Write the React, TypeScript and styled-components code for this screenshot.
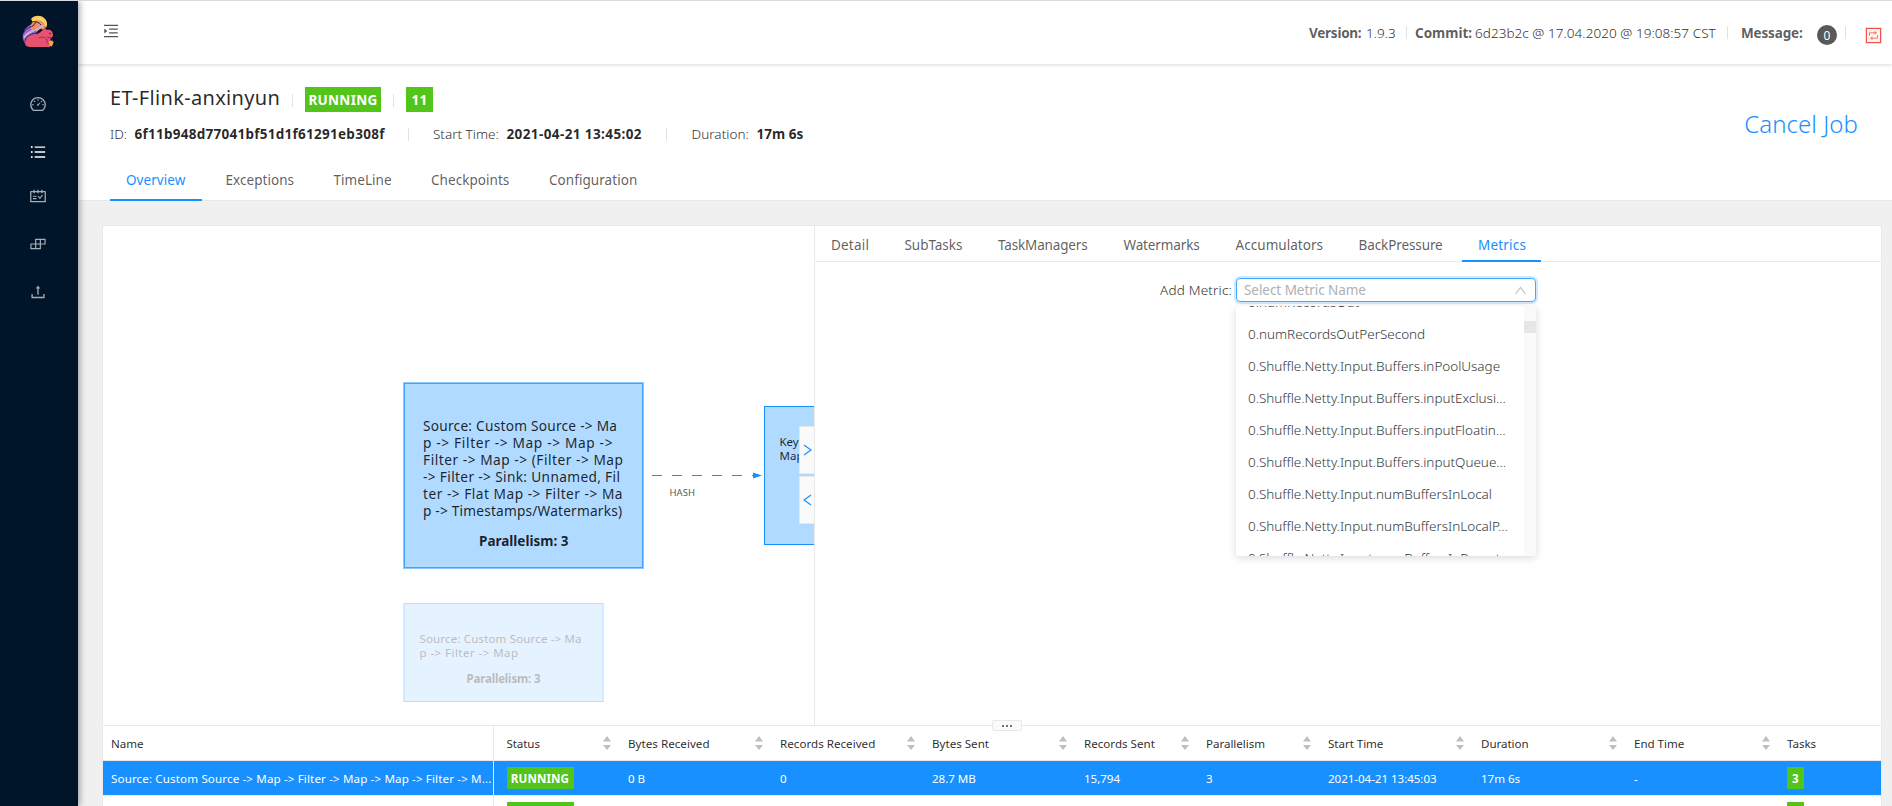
import React from 'react';
import styled, { createGlobalStyle, css } from 'styled-components';
import {
  AiOutlineBars,
  AiOutlineBuild,
  AiOutlineDashboard,
  AiOutlineMenuUnfold,
  AiOutlineSchedule,
  AiOutlineUpload,
} from 'react-icons/ai';

const blue = '#1890ff';
const green = '#52c41a';
const line = '#e8e8e8';
const font = "'Noto Sans', 'Open Sans', sans-serif";

const GlobalStyle = createGlobalStyle`
  * { box-sizing: border-box; }
  body {
    margin: 0;
    background: #f0f0f0;
    color: rgba(0, 0, 0, 0.65);
    font-family: ${font};
    font-size: 13.5px;
  }
`;

const Page = styled.div`
  display: flex;
  width: 1892px;
  height: 806px;
  overflow: hidden;
  border-top: 1px solid #d9d9de;
`;

const Sider = styled.aside`
  z-index: 2;
  flex: none;
  display: flex;
  flex-direction: column;
  align-items: center;
  width: 78px;
  padding: 12px 2px 0 0;
  background: #001529;
  box-shadow: 2px 0 6px rgba(0, 21, 41, 0.35);
`;

const Nav = styled.nav`
  display: flex;
  flex-direction: column;
  align-items: center;
  margin-top: 31px;
`;

const NavItem = styled.a<{ $active?: boolean }>`
  display: flex;
  align-items: center;
  justify-content: center;
  width: 76px;
  height: 48px;
  margin-bottom: ${(p) => (p.$active ? -4 : 0)}px;
  font-size: 18px;
  color: ${(p) => (p.$active ? '#fff' : 'rgba(255, 255, 255, 0.65)')};
`;

const Main = styled.main`
  flex: 1;
  min-width: 0;
  display: flex;
  flex-direction: column;
`;

const TopBar = styled.header`
  z-index: 1;
  flex: none;
  display: flex;
  justify-content: space-between;
  height: 63px;
  padding: 0 10px 0 24px;
  background: #fff;
  box-shadow: 0 1px 4px rgba(0, 21, 41, 0.16);
`;

const Toggle = styled.button`
  display: flex;
  align-items: flex-start;
  padding: 21px 0 0;
  border: 0;
  background: none;
  color: #555;
  font-size: 18px;
`;

const Info = styled.div`
  display: flex;
  align-items: center;
  height: 63px;
`;

const Text = styled.span<{ $w?: number; $ls?: number; $bold?: boolean; $light?: boolean }>`
  flex: none;
  white-space: nowrap;
  ${(p) => p.$w && css`width: ${p.$w}px;`}
  ${(p) => p.$light && css`color: #333;`}
  letter-spacing: ${(p) => p.$ls ?? 0}px;
  font-weight: ${(p) => (p.$bold ? 700 : p.$light ? 300 : 400)};
`;

const Strong = styled(Text)`
  color: rgba(0, 0, 0, 0.85);
`;

const Placeholder = styled(Text)`
  color: #b0b0b0;
`;

const Divider = styled.i<{ $gap?: string }>`
  flex: none;
  width: 1px;
  height: 13px;
  margin: ${(p) => p.$gap ?? '0 8px'};
  background: #e2e2e2;
`;

const Badge = styled.span`
  display: flex;
  align-items: center;
  justify-content: center;
  width: 20px;
  height: 20px;
  margin-top: 5px;
  border-radius: 50%;
  background: #595959;
  color: #fff;
  font-size: 12px;
`;

const JobHeader = styled.section`
  flex: none;
  display: flex;
  justify-content: space-between;
  height: 137px;
  padding: 0 34px 0 32px;
  background: #fff;
  border-bottom: 1px solid ${line};
`;

const JobInfo = styled.div`
  display: flex;
  flex-direction: column;
`;

const TitleRow = styled.div`
  flex: none;
  display: flex;
  align-items: center;
  height: 25px;
  margin-top: 23px;
`;

const Title = styled.h1`
  width: 182px;
  margin: -4px 0 0;
  font-size: 20px;
  font-weight: 400;
  letter-spacing: 0.32px;
  line-height: 24px;
  white-space: nowrap;
  color: rgba(0, 0, 0, 0.85);
`;

const Tag = styled.span<{ $w: number; $h: number; $size?: number; $ls?: number }>`
  flex: none;
  display: inline-flex;
  align-items: center;
  justify-content: center;
  width: ${(p) => p.$w}px;
  height: ${(p) => p.$h}px;
  background: ${green};
  color: #fff;
  font-size: ${(p) => p.$size ?? 13.5}px;
  font-weight: 700;
  letter-spacing: ${(p) => p.$ls ?? 0.3}px;
`;

const MetaRow = styled.div`
  flex: none;
  display: flex;
  align-items: center;
  height: 20px;
  margin-top: 12px;
`;

const Tabs = styled.div<{ $gap: number }>`
  flex: none;
  display: flex;
  gap: ${(p) => p.$gap}px;
`;

const Tab = styled.a<{ $w: number; $h: number; $lh: number; $ls: number; $active?: boolean }>`
  flex: none;
  width: ${(p) => p.$w}px;
  height: ${(p) => p.$h}px;
  padding-left: 16px;
  line-height: ${(p) => p.$lh}px;
  letter-spacing: ${(p) => p.$ls}px;
  white-space: nowrap;
  ${(p) =>
    p.$active &&
    css`
      color: ${blue};
      border-bottom: 2px solid ${blue};
    `}
`;

const JobTabs = styled(Tabs)`
  margin-top: 17px;
`;

const Cancel = styled.a`
  margin-top: 43px;
  font-size: 24px;
  font-weight: 300;
  letter-spacing: 0.05px;
  line-height: 34px;
  color: ${blue};
`;

const Content = styled.section`
  flex: 1;
  min-height: 0;
  display: flex;
  flex-direction: column;
  margin: 24px 10px 0 24px;
  background: #fff;
  border: 1px solid ${line};
  border-bottom: 0;
`;

const Panels = styled.div`
  flex: none;
  display: flex;
  height: 500px;
  border-bottom: 1px solid ${line};
`;

const GraphPane = styled.div`
  position: relative;
  flex: none;
  width: 712px;
  border-right: 1px solid ${line};
`;

const Graph = styled.svg`
  display: block;
  font-family: ${font};
`;

const PaneButtons = styled.div`
  position: absolute;
  top: 200px;
  right: 0;
  display: flex;
  flex-direction: column;
  gap: 2px;
`;

const PaneButton = styled.button`
  display: flex;
  align-items: center;
  justify-content: center;
  width: 15px;
  height: 48px;
  padding: 0;
  border: 1px solid ${line};
  border-right: 0;
  background: #fafafa;
`;

const DetailPane = styled.div`
  flex: 1;
  display: flex;
  flex-direction: column;
`;

const DetailTabs = styled(Tabs)`
  height: 36px;
  border-bottom: 1px solid ${line};
`;

const MetricRow = styled.div`
  display: flex;
  align-items: center;
  height: 24px;
  margin: 16px 0 0 345px;
`;

const Select = styled.div`
  position: relative;
  display: flex;
  align-items: center;
  justify-content: space-between;
  width: 300px;
  height: 24px;
  padding: 0 9px 0 7px;
  border: 1px solid #40a9ff;
  border-radius: 4px;
  box-shadow: 0 0 0 2px rgba(24, 144, 255, 0.2);
`;

const Dropdown = styled.div`
  position: absolute;
  top: 27px;
  left: -1px;
  display: flex;
  width: 300px;
  height: 250px;
  overflow: hidden;
  border-radius: 4px;
  background: #fff;
  box-shadow: 0 2px 8px rgba(0, 0, 0, 0.15);
`;

const Options = styled.ul`
  flex: 1;
  margin: -19px 0 0;
  padding: 0;
  list-style: none;
`;

const Option = styled.li`
  height: 32px;
  padding-left: 12px;
  color: #383838;
  font-weight: 300;
  line-height: 31px;
  letter-spacing: -0.02px;
  white-space: nowrap;
`;

const Track = styled.div`
  width: 12px;
  padding-top: 15px;
  background: #fafafa;
`;

const Thumb = styled.div`
  height: 12px;
  background: #e6e6e6;
`;

const Table = styled.div`
  position: relative;
  flex: 1;
  min-height: 0;
  font-size: 11.6px;
`;

const Handle = styled.div`
  position: absolute;
  top: -6px;
  left: 889px;
  display: flex;
  align-items: center;
  justify-content: center;
  gap: 2px;
  width: 30px;
  height: 11px;
  border: 1px solid ${line};
  border-radius: 2px;
  background: #fafafa;
`;

const Dot = styled.i`
  width: 2px;
  height: 2px;
  border-radius: 1px;
  background: #444;
`;

const Row = styled.div<{ $kind: 'head' | 'selected' | 'plain' }>`
  display: grid;
  grid-template-columns: 391px 121.5px 152px 152px 152px 122px 122px 153px 153px 153px 1fr;
  height: 35px;
  border-bottom: 1px solid ${line};
  ${(p) => p.$kind === 'head' && css`color: rgba(0, 0, 0, 0.85);`}
  ${(p) => p.$kind === 'selected' && css`background: ${blue}; color: #fff;`}
`;

const Cell = styled.div<{ $first?: boolean; $ls?: number }>`
  display: flex;
  align-items: center;
  justify-content: space-between;
  padding: 0 5px 0 ${(p) => (p.$first ? 8 : 12.5)}px;
  letter-spacing: ${(p) => p.$ls ?? -0.05}px;
  white-space: nowrap;
  ${(p) => p.$first && css`
    padding-right: 0;
    border-right: 1px solid ${line};
  `}
`;

const Logo = () => (
  <svg width="36" height="36" viewBox="0 0 36 36">
    <path d="M9 34C4 31 2 26 3 21c1-4 3-7 7-9l14-1c0 4-4 5-7 7l-4 15z" fill="#9b66c9" />
    <path d="M10 13c1-2 3-3 2-6 4-4 9-4 13-1 3 4 2 8-2 11l-3-2-3 4-2-4-3 3z" fill="#f0925f" />
    <path d="M11 6c3-4 10-4 13-1 3 3 4 6 2 10-1-3-2-6-5-7-3-1-6-1-8 1z" fill="#f9cf62" />
    <path d="M4 25c2-5 7-6 11-8 3-1 6-2 8-5" fill="none" stroke="#dba9dd" strokeWidth="1.800" />
    <path d="M5 29c0-5 5-8 11-9 4-1 7-1 8-4M3 21c2-5 6-7 10-8l3-4M12 9c3-1 7 0 9 3" fill="none" stroke="#2b2140" strokeWidth="1" />
    <path d="M6 33c-2-5 1-10 7-11 5-1 7-2 11-6l1-1 2 2c4-1 6 2 6 5 0 2-2 3-3 4l2 3-4 1 2 3v1H10z" fill="#e6526f" />
    <path d="M19 25c4-2 8 0 8 3 0 2 2 4 4 4M27 24l5 1" fill="none" stroke="#8e2748" strokeWidth="0.900" />
    <path d="M28.500 28.500l4-1 1 2-1.500 4-3-1z" fill="#f5a63a" />
    <circle cx="30" cy="20.500" r="0.800" fill="#3b1727" />
  </svg>
);

const Sorter = () => (
  <svg width="8" height="14" viewBox="0 0 8 14" fill="#bfbfbf">
    <path d="M4 0L8 5.500H0zM4 14L0 9h8z" />
  </svg>
);

const RetweetIcon = styled.svg`
  margin-top: 6px;
`;

const Retweet = () => (
  <RetweetIcon width="17" height="17" viewBox="0 0 17 17" fill="none">
    <rect x="0" y="0" width="17" height="17" rx="1" fill="#fdd9d6" />
    <rect x="1.500" y="1.500" width="14" height="14" fill="#fff3f1" stroke="#ee5549" />
    <path d="M4.500 8.800V5.800h6M12.500 8.200v3h-6" stroke="#f07a70" />
    <path d="M9.500 3.800L12 5.800L9.500 7.800zM7.500 9.200L5 11.200l2.500 2z" fill="#f07a70" />
  </RetweetIcon>
);

const Arrow = ({ d }: { d: string }) => (
  <svg width="9" height="14" viewBox="0 0 9 14" fill="none" stroke={blue} strokeWidth="1.200">
    <path d={d} />
  </svg>
);

const bigLines: [string, number, number][] = [
  ['Source: Custom Source -> Ma', 431, 194],
  ['p -> Filter -> Map -> Map ->', 447.5, 189.5],
  ['Filter -> Map -> (Filter -> Map', 464.5, 200],
  ['-> Filter -> Sink: Unnamed, Fil', 481.5, 197],
  ['ter -> Flat Map -> Filter -> Ma', 498.5, 199.500],
  ['p -> Timestamps/Watermarks)', 515.5, 199],
];

const JobGraph = () => (
  <Graph width="711" height="499" viewBox="103 226 711 499">
    <rect x="404" y="383" width="239" height="185" fill="#b0daff" stroke="#8cc8ff" strokeWidth="2" />
    <rect x="404.500" y="383.500" width="238" height="184" fill="none" stroke="#3fa3ff" />
    <g fontSize="13.700" fill="rgba(0,0,0,0.85)">
      {bigLines.map(([text, y, width]) => (
        <text key={y} x="423" y={y} textLength={width}>{text}</text>
      ))}
      <text x="479" y="546" fontWeight="700" fontSize="13.500">Parallelism: 3</text>
    </g>
    <g opacity="0.300">
      <rect x="404" y="603.500" width="199" height="98" fill="#abd7ff" stroke={blue} />
      <g fontSize="11.500" fill="#222">
        <text x="419.500" y="643" textLength="162">{'Source: Custom Source -> Ma'}</text>
        <text x="419.500" y="657" textLength="98.500">{'p -> Filter -> Map'}</text>
        <text x="466.500" y="683" fontWeight="700" textLength="74">Parallelism: 3</text>
      </g>
    </g>
    <rect x="764.500" y="406.500" width="199" height="138" fill="#b0daff" stroke={blue} />
    <g fontSize="11.500" fill="rgba(0,0,0,0.85)">
      <text x="779.500" y="446">Keyed</text>
      <text x="779.500" y="460">Map</text>
    </g>
    <path d="M652 475.500H754" stroke={blue} strokeDasharray="10 10" />
    <path d="M753 472.500L762 475.500L753 478.500z" fill={blue} />
    <text x="669.500" y="496" fontSize="9.500" textLength="25.500" fill="rgba(0,0,0,0.7)">HASH</text>
  </Graph>
);

const jobTabs: [string, number, number][] = [
  ['Overview', 91.5, 0.05],
  ['Exceptions', 100, 0.05],
  ['TimeLine', 89.5, 0.05],
  ['Checkpoints', 110, 0.05],
  ['Configuration', 119, 0.06],
];

const detailTabs: [string, number, number][] = [
  ['Detail', 69.5, 0.2],
  ['SubTasks', 89.5, -0.05],
  ['TaskManagers', 121.5, -0.15],
  ['Watermarks', 108, -0.12],
  ['Accumulators', 119, 0.05],
  ['BackPressure', 115.5, -0.1],
  ['Metrics', 79, 0.2],
];

const options = [
  '0.numRecordsOut',
  '0.numRecordsOutPerSecond',
  '0.Shuffle.Netty.Input.Buffers.inPoolUsage',
  '0.Shuffle.Netty.Input.Buffers.inputExclusi…',
  '0.Shuffle.Netty.Input.Buffers.inputFloatin…',
  '0.Shuffle.Netty.Input.Buffers.inputQueue…',
  '0.Shuffle.Netty.Input.numBuffersInLocal',
  '0.Shuffle.Netty.Input.numBuffersInLocalP…',
  '0.Shuffle.Netty.Input.numBuffersInRemote',
];

const columns: [string, number][] = [
  ['Status', -0.1],
  ['Bytes Received', 0.03],
  ['Records Received', 0.02],
  ['Bytes Sent', 0],
  ['Records Sent', 0],
  ['Parallelism', -0.05],
  ['Start Time', -0.05],
  ['Duration', -0.05],
  ['End Time', -0.05],
];

const values = ['0 B', '0', '28.7 MB', '15,794', '3', '2021-04-21 13:45:03', '17m 6s', '-'];

const statusTag = <Tag $w={67} $h={22} $size={11.6} $ls={0.1}>RUNNING</Tag>;

export default function App() {
  return (
    <>
      <GlobalStyle />
      <Page>
        <Sider>
          <Logo />
          <Nav>
            <NavItem><AiOutlineDashboard /></NavItem>
            <NavItem $active><AiOutlineBars /></NavItem>
            <NavItem><AiOutlineSchedule /></NavItem>
            <NavItem><AiOutlineBuild /></NavItem>
            <NavItem><AiOutlineUpload /></NavItem>
          </Nav>
        </Sider>
        <Main>
          <TopBar>
            <Toggle><AiOutlineMenuUnfold /></Toggle>
            <Info>
              <Text $bold $w={57} $ls={-0.25}>Version:</Text>
              <Text $light $w={40}>1.9.3</Text>
              <Divider $gap="0 8px 0 0" />
              <Text $bold $w={60}>Commit:</Text>
              <Text $light $w={252} $ls={0.05}>6d23b2c @ 17.04.2020 @ 19:08:57 CST</Text>
              <Divider $gap="0 13px 0 0" />
              <Text $bold $w={76} $ls={-0.15}>Message:</Text>
              <Badge>0</Badge>
              <Divider $gap="0 19px 0 8px" />
              <Retweet />
            </Info>
          </TopBar>
          <JobHeader>
            <JobInfo>
              <TitleRow>
                <Title>ET-Flink-anxinyun</Title>
                <Divider $gap="2px 12px 0 0" />
                <Tag $w={76} $h={25}>RUNNING</Tag>
                <Divider $gap="2px 12px 0" />
                <Tag $w={27} $h={25}>11</Tag>
              </TitleRow>
              <MetaRow>
                <Text $light $w={24.5}>ID:</Text>
                <Strong $bold $w={273.5} $ls={0.27}>6f11b948d77041bf51d1f61291eb308f</Strong>
                <Divider $gap="0 24px 0 0" />
                <Text $light $w={73.500}>Start Time:</Text>
                <Strong $bold $w={159} $ls={0.4}>2021-04-21 13:45:02</Strong>
                <Divider $gap="0 25px 0 0" />
                <Text $light $w={65} $ls={0.05}>Duration:</Text>
                <Strong $bold $ls={0.05}>17m 6s</Strong>
              </MetaRow>
              <JobTabs $gap={8}>
                {jobTabs.map(([name, w, ls], i) => (
                  <Tab key={name} $w={w} $h={40} $lh={39} $ls={ls} $active={i === 0}>{name}</Tab>
                ))}
              </JobTabs>
            </JobInfo>
            <Cancel>Cancel Job</Cancel>
          </JobHeader>
          <Content>
            <Panels>
              <GraphPane>
                <JobGraph />
                <PaneButtons>
                  <PaneButton><Arrow d="M1 2L8 7L1 12" /></PaneButton>
                  <PaneButton><Arrow d="M8 2L1 7L8 12" /></PaneButton>
                </PaneButtons>
              </GraphPane>
              <DetailPane>
                <DetailTabs $gap={4}>
                  {detailTabs.map(([name, w, ls]) => (
                    <Tab key={name} $w={w} $h={36} $lh={38} $ls={ls} $active={name === 'Metrics'}>{name}</Tab>
                  ))}
                </DetailTabs>
                <MetricRow>
                  <Text $light $w={76} $ls={0.2}>Add Metric:</Text>
                  <Select>
                    <Placeholder $ls={-0.05}>Select Metric Name</Placeholder>
                    <svg width="11" height="9" viewBox="0 0 11 9" fill="none" stroke="#bfbfbf" strokeWidth="1.200">
                      <path d="M0.500 8L5.500 1.500L10.500 8" />
                    </svg>
                    <Dropdown>
                      <Options>
                        {options.map((name) => (
                          <Option key={name}>{name}</Option>
                        ))}
                      </Options>
                      <Track><Thumb /></Track>
                    </Dropdown>
                  </Select>
                </MetricRow>
              </DetailPane>
            </Panels>
            <Table>
              <Row $kind="head">
                <Cell $first>Name</Cell>
                {columns.map(([name, ls]) => (
                  <Cell key={name} $ls={ls}>{name}<Sorter /></Cell>
                ))}
                <Cell>Tasks</Cell>
              </Row>
              <Row $kind="selected">
                <Cell $first $ls={0.13}>{'Source: Custom Source -> Map -> Filter -> Map -> Map -> Filter -> M...'}</Cell>
                <Cell>{statusTag}</Cell>
                {values.map((value, i) => <Cell key={i}>{value}</Cell>)}
                <Cell><Tag $w={17} $h={22} $size={11.6}>3</Tag></Cell>
              </Row>
              <Row $kind="plain">
                <Cell $first />
                <Cell>{statusTag}</Cell>
                {values.map((_, i) => <Cell key={i} />)}
                <Cell><Tag $w={17} $h={22} $size={11.6}>3</Tag></Cell>
              </Row>
              <Handle><Dot /><Dot /><Dot /></Handle>
            </Table>
          </Content>
        </Main>
      </Page>
    </>
  );
}
